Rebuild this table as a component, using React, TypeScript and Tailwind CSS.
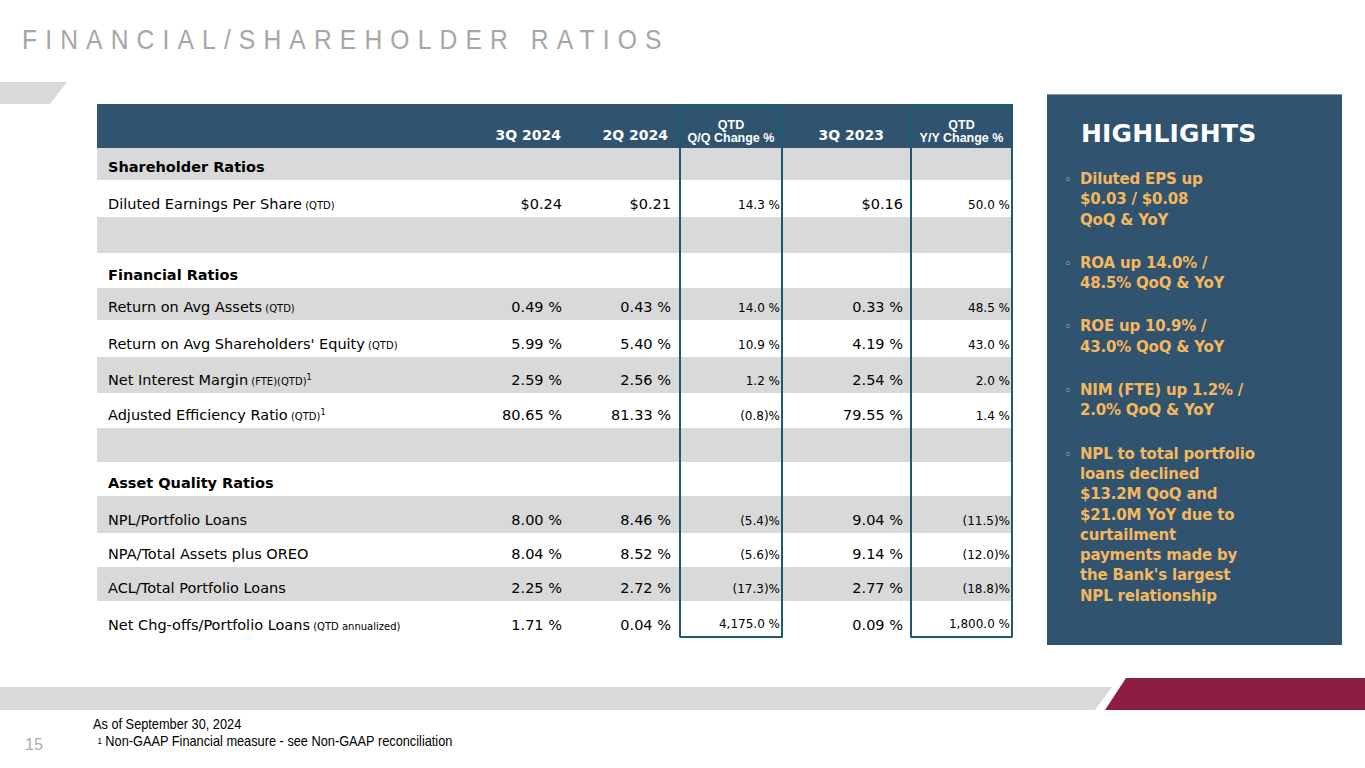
import React from "react";

type Row =
  | { kind: "section"; label: string; h: number }
  | { kind: "empty"; h: number }
  | { kind: "data"; label: string; note?: string; sup?: boolean; v: string[]; h: number };

const rows: Row[] = [
  { kind: "section", label: "Shareholder Ratios", h: 32 },
  { kind: "data", label: "Diluted Earnings Per Share", note: "(QTD)", v: ["$0.24", "$0.21", "14.3 %", "$0.16", "50.0 %"], h: 37 },
  { kind: "empty", h: 36 },
  { kind: "section", label: "Financial Ratios", h: 35 },
  { kind: "data", label: "Return on Avg Assets", note: "(QTD)", v: ["0.49 %", "0.43 %", "14.0 %", "0.33 %", "48.5 %"], h: 32 },
  { kind: "data", label: "Return on Avg Shareholders' Equity", note: "(QTD)", v: ["5.99 %", "5.40 %", "10.9 %", "4.19 %", "43.0 %"], h: 37 },
  { kind: "data", label: "Net Interest Margin", note: "(FTE)(QTD)", sup: true, v: ["2.59 %", "2.56 %", "1.2 %", "2.54 %", "2.0 %"], h: 36 },
  { kind: "data", label: "Adjusted Efficiency Ratio", note: "(QTD)", sup: true, v: ["80.65 %", "81.33 %", "(0.8)%", "79.55 %", "1.4 %"], h: 35 },
  { kind: "empty", h: 34 },
  { kind: "section", label: "Asset Quality Ratios", h: 34 },
  { kind: "data", label: "NPL/Portfolio Loans", v: ["8.00 %", "8.46 %", "(5.4)%", "9.04 %", "(11.5)%"], h: 37 },
  { kind: "data", label: "NPA/Total Assets plus OREO", v: ["8.04 %", "8.52 %", "(5.6)%", "9.14 %", "(12.0)%"], h: 34 },
  { kind: "data", label: "ACL/Total Portfolio Loans", v: ["2.25 %", "2.72 %", "(17.3)%", "2.77 %", "(18.8)%"], h: 34 },
  { kind: "data", label: "Net Chg-offs/Portfolio Loans", note: "(QTD annualized)", v: ["1.71 %", "0.04 %", "4,175.0 %", "0.09 %", "1,800.0 %"], h: 37 },
];

const bullets: string[][] = [
  ["Diluted EPS up", "$0.03 / $0.08", "QoQ & YoY"],
  ["ROA up 14.0% /", "48.5% QoQ & YoY"],
  ["ROE up 10.9% /", "43.0% QoQ & YoY"],
  ["NIM (FTE) up 1.2% /", "2.0% QoQ & YoY"],
  [
    "NPL to total portfolio",
    "loans declined",
    "$13.2M QoQ and",
    "$21.0M YoY due to",
    "curtailment",
    "payments made by",
    "the Bank's largest",
    "NPL relationship",
  ],
];

const tFont = { fontFamily: "'DejaVu Sans', Verdana, sans-serif" };

export default function App() {
  return (
    <div className="w-[1365px] h-[768px] bg-white relative overflow-hidden flex flex-col" style={tFont}>
      {/* Title */}
      <div
        className="pl-[25px] pt-[26px] h-[82px] text-[28px] text-[#a6a6a6] tracking-[0.33em] leading-none whitespace-nowrap"
        style={{ fontFamily: "'Liberation Sans', Arial, sans-serif", transform: "scaleX(0.88)", transformOrigin: "left" }}
      >
        FINANCIAL/SHAREHOLDER RATIOS
      </div>

      {/* Main area */}
      <div className="flex items-start h-[563px]">
        <div className="w-[97px] shrink-0">
          <svg width="68" height="22" viewBox="0 0 68 22" className="block">
            <polygon points="0,0 67,0 50,22 0,22" fill="#d9d9d9" />
          </svg>
        </div>

        {/* Table */}
        <div className="mt-[22px] w-[916px] shrink-0 text-black">
          {/* Header */}
          <div className="flex h-[44px] bg-[#30536f] text-white font-bold">
            <div className="w-[373px]" />
            <div className="w-[98px] flex items-end justify-end pr-[7px] pb-[2px] text-[14px]">3Q 2024</div>
            <div className="w-[111px] flex items-end justify-end pr-[11px] pb-[2px] text-[14px]">2Q 2024</div>
            <div
              className="w-[104px] box-border border-x-2 border-t-2 border-[#1d5a72] rounded-t-[2px] flex flex-col items-center justify-end pb-[3px] text-[12.5px] leading-[13px]"
              style={{ fontFamily: "'Liberation Sans', Arial, sans-serif" }}
            >
              <span>QTD</span>
              <span>Q/Q Change %</span>
            </div>
            <div className="w-[127px] flex items-end justify-end pr-[26px] pb-[2px] text-[14px]">3Q 2023</div>
            <div
              className="w-[103px] box-border border-x-2 border-t-2 border-[#1d5a72] rounded-t-[2px] flex flex-col items-center justify-end pb-[3px] text-[12.5px] leading-[13px]"
              style={{ fontFamily: "'Liberation Sans', Arial, sans-serif" }}
            >
              <span>QTD</span>
              <span>Y/Y Change %</span>
            </div>
          </div>

          {rows.map((r, i) => {
            const bg = i % 2 === 0 ? "bg-[#d9d9d9]" : "bg-white";
            const last = i === rows.length - 1;
            const v = r.kind === "data" ? r.v : ["", "", "", "", ""];
            return (
              <div key={i} className={`flex ${bg}`} style={{ height: r.h }}>
                <div className="w-[373px] flex items-end pl-[11px] pb-[6px] text-[14.5px] whitespace-nowrap leading-none">
                  {r.kind === "section" && <span className="font-bold">{r.label}</span>}
                  {r.kind === "data" && (
                    <span>
                      {r.label}
                      {r.note && <span className="text-[10px]"> {r.note}</span>}
                      {r.sup && <sup className="text-[8px] relative -top-[5px]">1</sup>}
                    </span>
                  )}
                </div>
                <div className="w-[98px] flex items-end justify-end pr-[6px] pb-[6px] text-[14.5px] leading-none">{v[0]}</div>
                <div className="w-[111px] flex items-end justify-end pr-[8px] pb-[6px] text-[14.5px] leading-none">{v[1]}</div>
                <div
                  className={`w-[104px] box-border border-x-2 border-[#1d5a72] flex items-end justify-end pr-[1px] pb-[6px] text-[12px] leading-none ${last ? "border-b-2 rounded-b-[2px]" : ""}`}
                  style={{ height: r.h }}
                >
                  {v[2]}
                </div>
                <div className="w-[127px] flex items-end justify-end pr-[7px] pb-[6px] text-[14.5px] leading-none">{v[3]}</div>
                <div
                  className={`w-[103px] box-border border-x-2 border-[#1d5a72] flex items-end justify-end pr-[1px] pb-[6px] text-[12px] leading-none ${last ? "border-b-2 rounded-b-[2px]" : ""}`}
                  style={{ height: r.h }}
                >
                  {v[4]}
                </div>
              </div>
            );
          })}
        </div>

        {/* Highlights */}
        <div className="ml-[34px] mt-[12px] w-[295px] h-[551px] shrink-0 bg-[#30536f] border-t border-[#7f9ab0] pl-[17px] pt-[24px]">
          <div className="pl-[17px] text-white font-bold text-[25px] leading-[30px] tracking-[0.2px]">HIGHLIGHTS</div>
          <div className="mt-[20px] flex flex-col gap-[23px]">
            {bullets.map((b, i) => (
              <div key={i} className="flex">
                <div className="w-[16px] shrink-0 text-[#b9c4cf] text-[13px] leading-[21px]">◦</div>
                <div className="text-[#f5b75e] font-bold text-[15px] leading-[20.3px] tracking-[-0.2px]">
                  {b.map((l, j) => (
                    <div key={j} className="whitespace-nowrap">
                      {l}
                    </div>
                  ))}
                </div>
              </div>
            ))}
          </div>
        </div>
      </div>

      {/* Bottom band */}
      <div className="mt-[33px] h-[32px]">
        <svg width="1365" height="32" viewBox="0 0 1365 32" className="block">
          <polygon points="0,9 1112,9 1095,32 0,32" fill="#d9d9d9" />
          <polygon points="1126,0 1365,0 1365,32 1105,32" fill="#8b1e41" />
        </svg>
      </div>

      {/* Footnotes */}
      <div className="flex" style={{ fontFamily: "'Liberation Sans', Arial, sans-serif" }}>
        <div className="w-[93px] pl-[25px] pt-[27px] text-[16px] text-[#ababab] leading-none">15</div>
        <div className="pt-[6px] text-[14.5px] text-black leading-[17px] whitespace-nowrap" style={{ transform: "scaleX(0.88)", transformOrigin: "left" }}>
          <div>As of September 30, 2024</div>
          <div className="pl-[5px]">
            <sup className="text-[9px] relative -top-[2px]">1</sup> Non-GAAP Financial measure - see Non-GAAP reconciliation
          </div>
        </div>
      </div>
    </div>
  );
}
